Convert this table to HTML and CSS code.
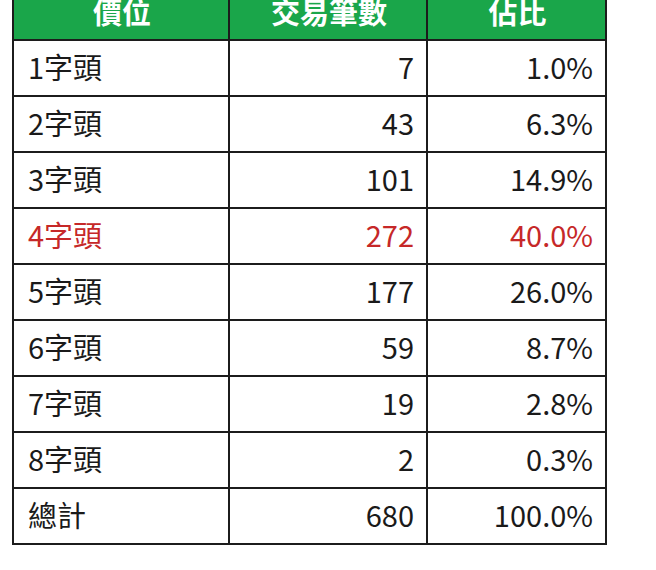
FILE: index.html
```html
<!DOCTYPE html>
<html lang="zh-Hant">
<head>
<meta charset="utf-8">
<title>價位統計</title>
<link rel="stylesheet" href="styles.css">
</head>
<body>
<div class="wrap">
<table class="stats">
<thead>
<tr><th class="c1">價位</th><th class="c2">交易筆數</th><th class="c3">佔比</th></tr>
</thead>
<tbody>
<tr><td>1字頭</td><td class="num">7</td><td class="num">1.0%</td></tr>
<tr><td>2字頭</td><td class="num">43</td><td class="num">6.3%</td></tr>
<tr><td>3字頭</td><td class="num">101</td><td class="num">14.9%</td></tr>
<tr class="hl"><td>4字頭</td><td class="num">272</td><td class="num">40.0%</td></tr>
<tr><td>5字頭</td><td class="num">177</td><td class="num">26.0%</td></tr>
<tr><td>6字頭</td><td class="num">59</td><td class="num">8.7%</td></tr>
<tr><td>7字頭</td><td class="num">19</td><td class="num">2.8%</td></tr>
<tr><td>8字頭</td><td class="num">2</td><td class="num">0.3%</td></tr>
<tr><td>總計</td><td class="num">680</td><td class="num">100.0%</td></tr>
</tbody>
</table>
</div>
</body>
</html>
```
FILE: styles.css
```css
html, body {
  margin: 0;
  padding: 0;
  background: #ffffff;
}
.wrap {
  padding-left: 12px;
  overflow: hidden;
  height: 570px;
}
.stats {
  border-collapse: collapse;
  margin-top: -17px;
  font-family: "Noto Sans CJK TC", "Noto Sans", sans-serif;
  font-size: 29px;
  color: #1a1a1a;
}
.stats th, .stats td {
  border: 2px solid #1c1c1c;
  height: 56px;
  padding: 0 12px 4px 14px;
  box-sizing: border-box;
  line-height: 1.2;
}
.stats th {
  background: #1aa64a;
  color: #ffffff;
  font-weight: 700;
  text-align: center;
  padding-bottom: 2px;
}
.c1 { width: 216px; }
.c2 { width: 198px; }
.c3 { width: 179px; }
.stats td { text-align: left; }
.stats td.num { text-align: right; }
.hl td { color: #c62828; }
```
